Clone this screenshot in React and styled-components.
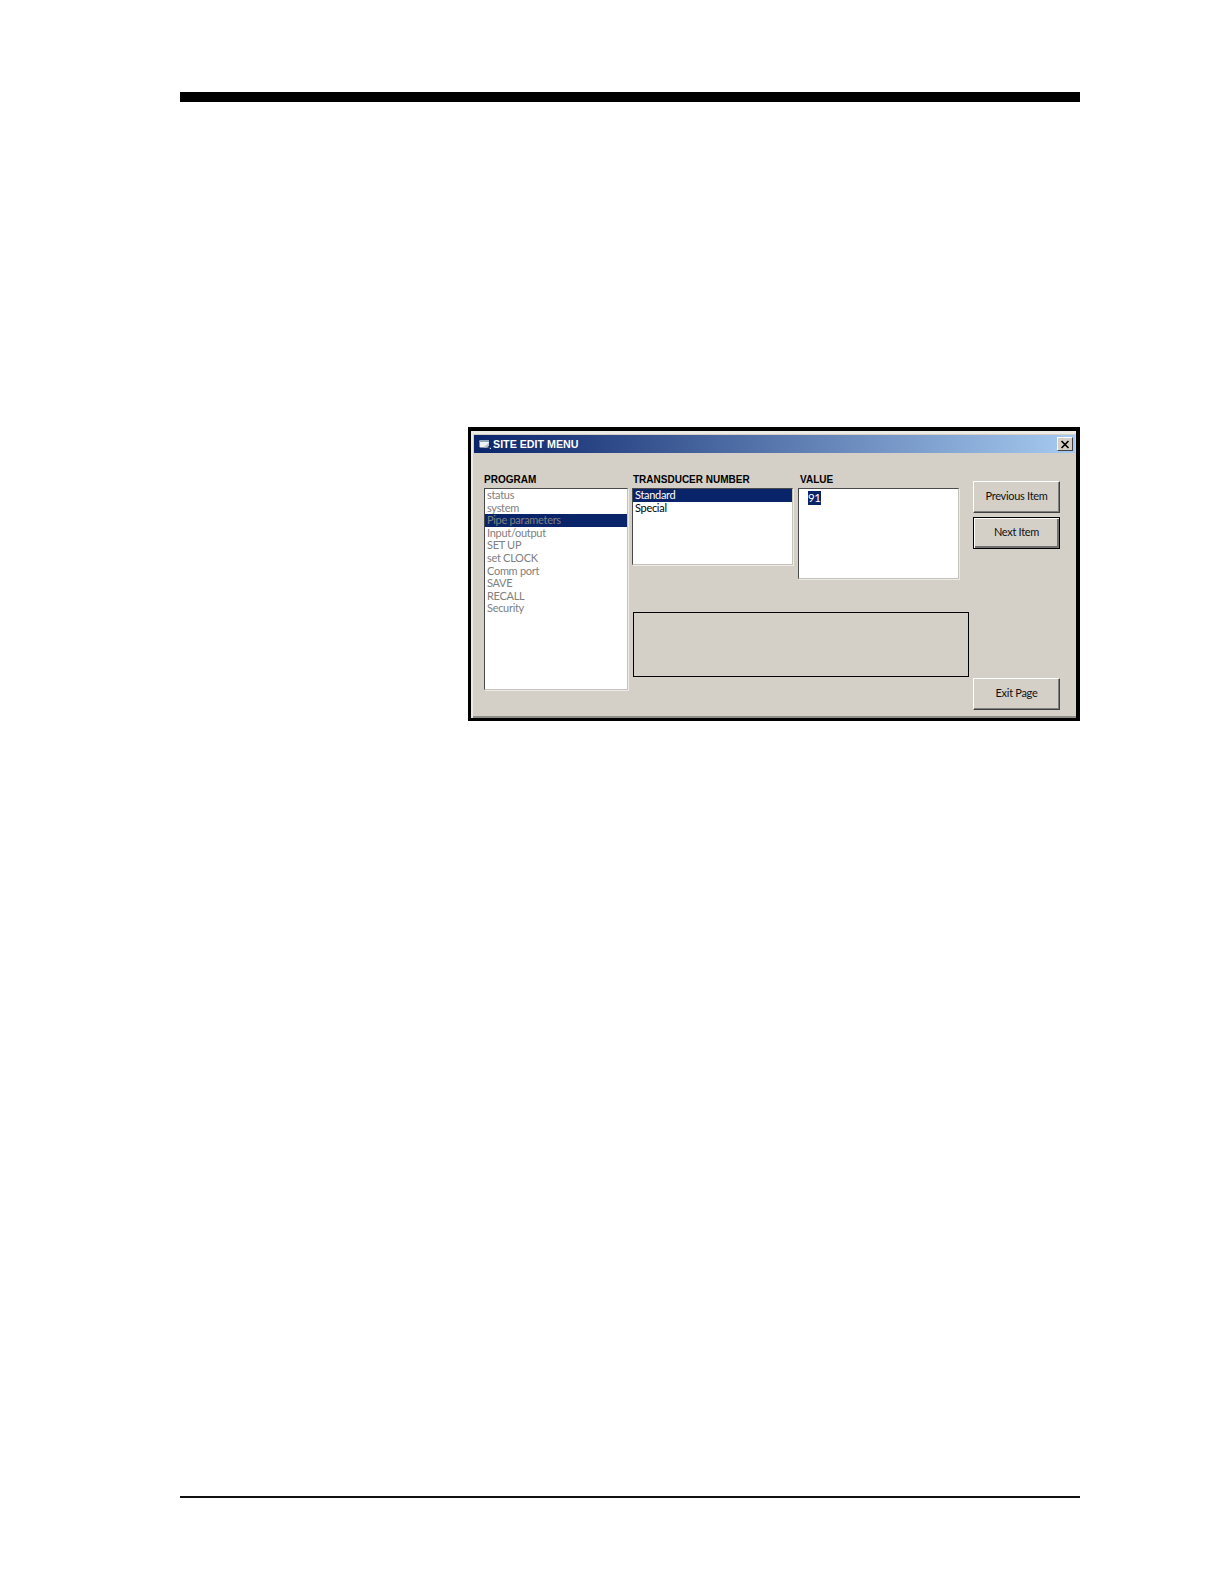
import React from 'react';
import styled, { createGlobalStyle } from 'styled-components';

const Global = createGlobalStyle`
  html, body { margin: 0; padding: 0; background: #fff; }
  body { font-family: "Liberation Sans", Arial, sans-serif; }
`;

const Page = styled.div`
  width: 900px;
  height: 1584px;
  box-sizing: border-box;
  margin-left: 180px;
  padding-top: 92px;
  display: flex;
  flex-direction: column;
`;
const TopRule = styled.div`
  height: 10px;
  background: #000;
`;
const FootRule = styled.div`
  height: 1.5px;
  background: #111;
  margin-top: 775px;
`;
const Window = styled.div`
  align-self: flex-end;
  margin-top: 325px;
  width: 612px;
  height: 294px;
  box-sizing: border-box;
  border-style: solid;
  border-color: #000;
  border-width: 4px 4px 3px 3px;
  background: #d4d0c8;
  display: flex;
  flex-direction: column;
  color: #000;
  box-shadow: inset 2px 3px 0 #ecebe6, inset 0 -2px 0 #8e8d88;
`;
const TitleBar = styled.div`
  margin: 4px 1px 0 3px;
  height: 18px;
  flex: none;
  background: linear-gradient(90deg, #0a246a 0%, #a6caf0 100%);
  display: flex;
  align-items: center;
  padding: 0 2px 0 5px;
  gap: 2px;
`;
const TitleText = styled.span`
  color: #fff;
  font-weight: bold;
  font-size: 10.7px;
  flex: 1;
`;
const CloseBox = styled.div`
  width: 16px;
  height: 14px;
  box-sizing: border-box;
  background: #d4d0c8;
  border-style: solid;
  border-width: 1px;
  border-color: #fff #404040 #404040 #fff;
  display: flex;
  align-items: center;
  justify-content: center;
`;
const Body = styled.div`
  flex: 1;
  display: grid;
  grid-template-columns: 144px 337px 87px;
  column-gap: 4px;
  padding: 20px 0 0 13px;
  grid-template-rows: auto;
`;
const Column = styled.div`
  display: flex;
  flex-direction: column;
`;
const Label = styled.div`
  font-weight: bold;
  font-size: 10px;
  line-height: 14px;
  height: 15px;
  padding-left: ${p => p.$indent || 0}px;
  white-space: nowrap;
`;
const ListBox = styled.div`
  box-sizing: border-box;
  background: #fff;
  border-style: solid;
  border-width: 1px;
  border-color: #4a4a4a #c4c2bb #c4c2bb #4a4a4a;
  box-shadow: 1px 1px 0 #ecebe6;
  height: ${p => p.$h}px;
  font-family: Lato, "Liberation Sans", sans-serif;
  font-size: 11px;
  letter-spacing: -0.3px;
`;
const ProgramItem = styled.div`
  height: 12.6px;
  line-height: 12.6px;
  padding-left: 2px;
  color: #808080;
  background: ${p => (p.$selected ? '#0a246a' : 'transparent')};
`;
const ChoiceItem = styled.div`
  height: 13px;
  line-height: 12px;
  padding-left: 2px;
  color: ${p => (p.$selected ? '#fff' : '#000')};
  background: ${p => (p.$selected ? '#0a246a' : 'transparent')};
`;
const Lists = styled.div`
  display: flex;
  gap: 5px;
  height: 139px;
`;
const ListColumn = styled.div`
  display: flex;
  flex-direction: column;
  width: ${p => p.$w}px;
`;
const ValueText = styled.span`
  display: inline-block;
  margin: 2px 0 0 9px;
  height: 14px;
  line-height: 14px;
  background: #0a246a;
  color: #fff;
  font-size: 11.5px;
`;
const Message = styled.div`
  box-sizing: border-box;
  height: 65px;
  margin-left: 1px;
  border: 1px solid #000;
`;
const Buttons = styled.div`
  display: flex;
  flex-direction: column;
  padding-top: 8px;
  height: 232px;
  box-sizing: border-box;
`;
const Button = styled.div`
  box-sizing: border-box;
  width: 87px;
  height: 32px;
  flex: none;
  display: flex;
  align-items: center;
  justify-content: center;
  padding-bottom: 3px;
  font-family: Lato, "Liberation Sans", sans-serif;
  font-size: 11px;
  letter-spacing: -0.3px;
  color: #111;
  background: #d4d0c8;
  border-style: solid;
  border-width: 1px;
  border-color: ${p => (p.$default ? '#000' : '#fff #404040 #404040 #fff')};
  box-shadow: ${p => (p.$default
    ? 'inset 1px 1px 0 #fff, inset -2px -2px 0 #707070'
    : 'inset -1px -1px 0 #808080')};
  margin-top: ${p => p.$gap || 0}px;
`;

const program = ['status', 'system', 'Pipe parameters', 'Input/output', 'SET UP', 'set CLOCK', 'Comm port', 'SAVE', 'RECALL', 'Security'];

export default function App() {
  return (
    <Page>
      <Global />
      <TopRule />
      <Window>
        <TitleBar>
          <svg width="12" height="12" viewBox="0 0 12 12">
            <rect x="0.5" y="2.5" width="9.5" height="7" rx="0.8" fill="#eef2f2" />
            <rect x="0.5" y="2" width="9.5" height="2" fill="#8fa6b8" />
            <path d="M10 4.5v5H4.5l5.5-5z" fill="#b8c4d0" />
            <path d="M8 9.5h2.5V7.5z" fill="#10204c" />
            <rect x="10.8" y="9.8" width="1.2" height="1.2" fill="#dfe6f0" />
          </svg>
          <TitleText>SITE EDIT MENU</TitleText>
          <CloseBox>
            <svg width="10" height="9" viewBox="0 0 10 9">
              <path d="M1.5 1l7 7M8.5 1l-7 7" stroke="#000" strokeWidth="1.7" />
            </svg>
          </CloseBox>
        </TitleBar>
        <Body>
          <Column>
            <Label>PROGRAM</Label>
            <ListBox $h={202}>
              {program.map(p => (
                <ProgramItem key={p} $selected={p === 'Pipe parameters'}>{p}</ProgramItem>
              ))}
            </ListBox>
          </Column>
          <Column>
            <Lists>
              <ListColumn $w={161}>
                <Label $indent={1}>TRANSDUCER NUMBER</Label>
                <ListBox $h={77}>
                  <ChoiceItem $selected>Standard</ChoiceItem>
                  <ChoiceItem>Special</ChoiceItem>
                </ListBox>
              </ListColumn>
              <ListColumn $w={161}>
                <Label $indent={2}>VALUE</Label>
                <ListBox $h={91}>
                  <ValueText>91</ValueText>
                </ListBox>
              </ListColumn>
            </Lists>
            <Message />
          </Column>
          <Buttons>
            <Button>Previous Item</Button>
            <Button $default $gap={4}>Next Item</Button>
            <Button $gap={129}>Exit Page</Button>
          </Buttons>
        </Body>
      </Window>
      <FootRule />
    </Page>
  );
}
